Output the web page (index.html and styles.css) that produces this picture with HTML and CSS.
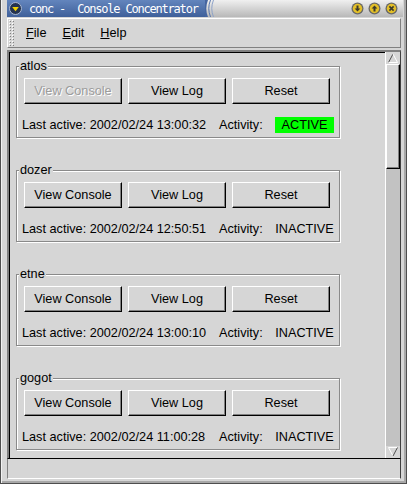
FILE: index.html
```html
<!DOCTYPE html>
<html lang="en">
    <head>
        <title>conc - Console Concentrator</title>
        <link rel="stylesheet" href="styles.css">
    </head>
    <body>
        <div class="window">
            <div class="titlebar">
                <div class="titleBlue">
                    <svg class="titleIcon" width="13" height="13" viewBox="0 0 13 13">
                        <circle cx="6.5" cy="6.5" r="6" fill="#24334f" stroke="#aab8d2" stroke-width="1"/>
                        <polygon points="3.2,5 9.8,5 6.5,9.2" fill="#f2d200"/>
                    </svg>
                    <span class="titleText">conc -  Console Concentrator</span>
                </div>
                <svg class="swoosh" width="12" height="17" viewBox="0 0 12 17">
                    <path d="M0 0 H3 Q-0.5 8.5 3 17 H0 Z" fill="#4565a0"/>
                    <path d="M5.5 0 Q2 8.5 5.5 17" stroke="#5876ae" stroke-width="1" fill="none"/>
                    <path d="M8.5 0 Q5 8.5 8.5 17" stroke="#8da2c8" stroke-width="1" fill="none"/>
                </svg>
                <div class="titleFill"></div>
                <svg class="winButton" width="13" height="13" viewBox="0 0 13 13">
                    <circle cx="6.5" cy="6.5" r="6" fill="#686868"/>
                    <circle cx="6.5" cy="6.5" r="4.7" fill="#e4c028"/>
                    <path d="M6.5 9.6 L3.6 6.6 H5.5 V3.4 H7.5 V6.6 H9.4 Z" fill="#3b3a2c"/>
                </svg>
                <svg class="winButton" width="13" height="13" viewBox="0 0 13 13">
                    <circle cx="6.5" cy="6.5" r="6" fill="#686868"/>
                    <circle cx="6.5" cy="6.5" r="4.7" fill="#e4c028"/>
                    <path d="M6.5 3.4 L3.6 6.4 H5.5 V9.6 H7.5 V6.4 H9.4 Z" fill="#3b3a2c"/>
                </svg>
                <svg class="winButton" width="13" height="13" viewBox="0 0 13 13">
                    <circle cx="6.5" cy="6.5" r="6" fill="#686868"/>
                    <circle cx="6.5" cy="6.5" r="4.7" fill="#e4c028"/>
                    <path d="M4.4 4.4 L8.6 8.6 M8.6 4.4 L4.4 8.6" stroke="#3b3a2c" stroke-width="1.6"/>
                </svg>
            </div>

            <div class="menubar">
                <svg class="handle" width="6" height="26">
                    <pattern id="dots" width="3" height="3" patternUnits="userSpaceOnUse">
                        <rect x="0" y="0" width="1" height="1" fill="#ffffff"/>
                        <rect x="1" y="1" width="1" height="1" fill="#808080"/>
                    </pattern>
                    <rect width="6" height="26" fill="url(#dots)"/>
                </svg>
                <span class="menuItem"><u>F</u>ile</span>
                <span class="menuItem"><u>E</u>dit</span>
                <span class="menuItem"><u>H</u>elp</span>
            </div>

            <div class="scrollFrame">
                <div class="viewport">
                    <div class="hostGroup">
                        <span class="hostName">atlos</span>
                        <div class="buttonRow">
                            <button class="pushButton" disabled>View Console</button>
                            <button class="pushButton">View Log</button>
                            <button class="pushButton">Reset</button>
                        </div>
                        <div class="infoRow">
                            <span class="lastActive">Last active: 2002/02/24 13:00:32</span>
                            <span class="activityLabel">Activity:</span>
                            <span class="activity active">ACTIVE</span>
                        </div>
                    </div>

                    <div class="hostGroup">
                        <span class="hostName">dozer</span>
                        <div class="buttonRow">
                            <button class="pushButton">View Console</button>
                            <button class="pushButton">View Log</button>
                            <button class="pushButton">Reset</button>
                        </div>
                        <div class="infoRow">
                            <span class="lastActive">Last active: 2002/02/24 12:50:51</span>
                            <span class="activityLabel">Activity:</span>
                            <span class="activity">INACTIVE</span>
                        </div>
                    </div>

                    <div class="hostGroup">
                        <span class="hostName">etne</span>
                        <div class="buttonRow">
                            <button class="pushButton">View Console</button>
                            <button class="pushButton">View Log</button>
                            <button class="pushButton">Reset</button>
                        </div>
                        <div class="infoRow">
                            <span class="lastActive">Last active: 2002/02/24 13:00:10</span>
                            <span class="activityLabel">Activity:</span>
                            <span class="activity">INACTIVE</span>
                        </div>
                    </div>

                    <div class="hostGroup">
                        <span class="hostName">gogot</span>
                        <div class="buttonRow">
                            <button class="pushButton">View Console</button>
                            <button class="pushButton">View Log</button>
                            <button class="pushButton">Reset</button>
                        </div>
                        <div class="infoRow">
                            <span class="lastActive">Last active: 2002/02/24 11:00:28</span>
                            <span class="activityLabel">Activity:</span>
                            <span class="activity">INACTIVE</span>
                        </div>
                    </div>
                </div>

                <div class="scrollbar">
                    <div class="scrollArrow">
                        <svg width="12" height="10" viewBox="0 0 12 10">
                            <path d="M1.5 9.5 L6 1" stroke="#505050" fill="none"/>
                            <path d="M6 1 L10.5 9.5 H1.5" stroke="#ffffff" fill="none"/>
                        </svg>
                    </div>
                    <div class="scrollThumb"></div>
                    <div class="scrollTrough"></div>
                    <div class="scrollArrow">
                        <svg width="12" height="10" viewBox="0 0 12 10">
                            <path d="M1.5 0.5 H10.5 M1.5 0.5 L6 9" stroke="#ffffff" fill="none"/>
                            <path d="M6 9 L10.5 0.5" stroke="#505050" fill="none"/>
                        </svg>
                    </div>
                </div>
            </div>

            <div class="statusBar"></div>
        </div>
    </body>
</html>
```

FILE: styles.css
```css
body{
    margin: 0;
    background-color: #d6d6d6;
    font-family: "Liberation Sans", Arial, sans-serif;
    font-size: 12.7px;
    color: #000;
}

.window{
    width: 407px;
    height: 484px;
    box-sizing: border-box;
    display: flex;
    flex-direction: column;
    background-color: #d6d6d6;
    border: 1px solid #4e4e4e;
    border-top: none;
    box-shadow: inset 1px 0 #f2f2f2, inset -2px -2px #a8a8a8;
}

/* title bar */

.titlebar{
    display: flex;
    align-items: center;
    height: 17px;
    margin: 0 3px 1px 6px;
    background: linear-gradient(#f0f0f0, #b8b8b8);
}

.titleBlue{
    display: flex;
    align-items: center;
    width: 198px;
    height: 100%;
    background: linear-gradient(#6385bd, #3f609a);
}

.titleIcon{
    margin: 0 7px 0 2px;
}

.titleText{
    font-family: "DejaVu Sans Mono", monospace;
    font-size: 12px;
    letter-spacing: -1.2px;
    white-space: pre;
    color: #fff;
}

.swoosh{
    display: block;
}

.titleFill{
    flex: 1;
}

.winButton{
    margin-right: 4px;
}

.winButton:last-child{
    margin-right: 5px;
}

/* menu bar */

.menubar{
    display: flex;
    align-items: center;
    height: 30px;
    box-sizing: border-box;
    margin: 0 5px 2px 6px;
    border: 1px solid;
    border-color: #ffffff #808080 #808080 #ffffff;
}

.handle{
    margin: 0 3px 0 1px;
}

.menuItem{
    padding: 0 8px;
}

/* scroll view */

.scrollFrame{
    display: flex;
    height: 408px;
    box-sizing: border-box;
    margin: 0 5px 0 6px;
    border-style: solid;
    border-width: 2px 1px 0 2px;
    border-color: #808080 #404040 #808080 #808080;
    box-shadow: inset 1px 1px #000;
}

.viewport{
    flex: 1;
    overflow: hidden;
    padding: 14px 0 0 7px;
    border-right: 1px solid #fff;
}

.hostGroup{
    position: relative;
    width: 324px;
    box-sizing: border-box;
    margin-bottom: 32px;
    padding: 11px 0 4px 7px;
    border: 1px solid #8a8a8a;
    box-shadow: inset 1px 1px #fff, 1px 1px #fff;
}

.hostName{
    position: absolute;
    top: -8px;
    left: 2px;
    padding: 0 1px;
    line-height: 14px;
    background-color: #d6d6d6;
}

.buttonRow{
    display: flex;
    gap: 6px;
}

.pushButton{
    width: 98px;
    height: 26px;
    padding: 0;
    font-family: "Liberation Sans", Arial, sans-serif;
    font-size: 12.7px;
    color: #000;
    background-color: #d6d6d6;
    border: 1px solid;
    border-color: #ffffff #000000 #000000 #ffffff;
    box-shadow: inset -1px -1px #808080;
}

.pushButton:disabled{
    color: #9c9c9c;
    text-shadow: 1px 1px #fff;
}

.infoRow{
    display: flex;
    align-items: center;
    height: 16px;
    margin: 13px 0 0 -2px;
    line-height: 16px;
}

.lastActive{
    width: 197px;
    white-space: nowrap;
}

.activityLabel{
    width: 56px;
}

.activity{
    width: 59px;
    text-align: center;
}

.activity.active{
    background-color: #00ff00;
}

/* scrollbar */

.scrollbar{
    display: flex;
    flex-direction: column;
    width: 14px;
    background-color: #c2c2c2;
}

.scrollArrow{
    display: flex;
    align-items: center;
    justify-content: center;
    height: 12px;
    background-color: #d6d6d6;
}

.scrollThumb{
    height: 105px;
    box-sizing: border-box;
    background-color: #d6d6d6;
    border: 1px solid;
    border-color: #ffffff #000000 #000000 #ffffff;
    box-shadow: inset -1px -1px #808080;
}

.scrollTrough{
    flex: 1;
}

/* status bar */

.statusBar{
    height: 21px;
    box-sizing: border-box;
    margin: 0 5px 0 6px;
    border: 1px solid;
    border-color: #000000 #404040 #ffffff #808080;
}
```
